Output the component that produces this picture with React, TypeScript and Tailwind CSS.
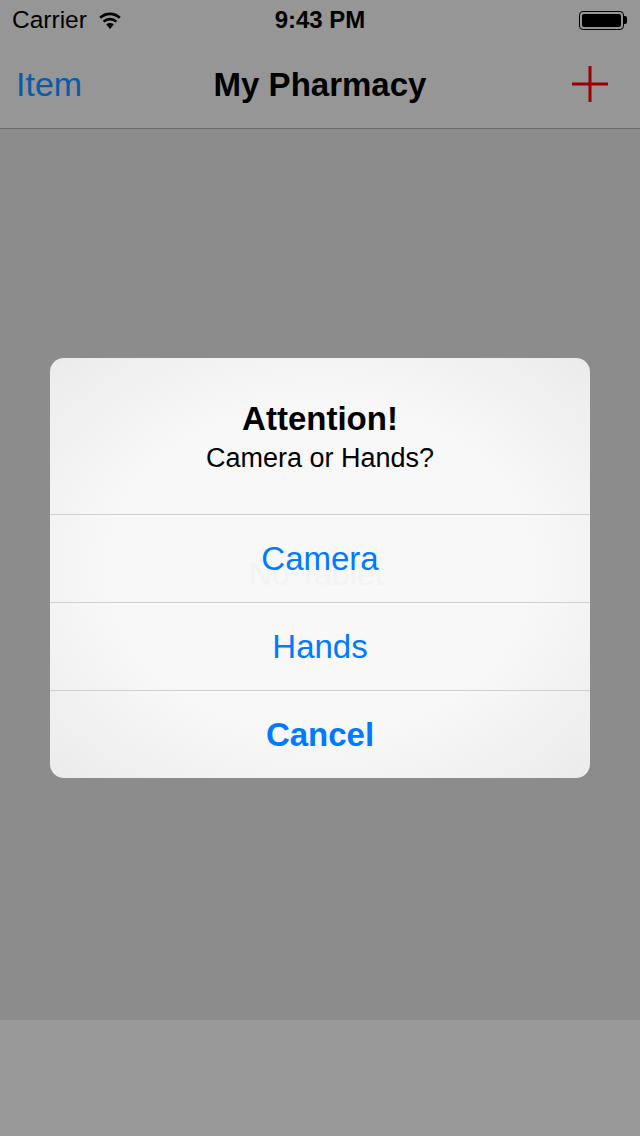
import { Fragment } from "react";

const font = { fontFamily: '"Liberation Sans", Arial, sans-serif' };

function Wifi() {
  return (
    <svg width="26" height="20" viewBox="0 0 26 20" className="text-black">
      <path d="M13 19 L9.2 14.6 A5.6 5.6 0 0 1 16.8 14.6 Z" fill="currentColor" />
      <path d="M6.6 11.6 A9.4 9.4 0 0 1 19.4 11.6" stroke="currentColor" strokeWidth="2.6" fill="none" />
      <path d="M3.2 7.8 A14.2 14.2 0 0 1 22.8 7.8" stroke="currentColor" strokeWidth="2.6" fill="none" />
    </svg>
  );
}

function Battery() {
  return (
    <div className="flex items-center">
      <div className="h-[19px] w-[45px] rounded-[4px] border border-black p-[2px]">
        <div className="h-full w-full rounded-[2px] bg-black" />
      </div>
      <div className="h-[8px] w-[3px] rounded-r-[2px] bg-black" />
    </div>
  );
}

function Plus() {
  return (
    <svg width="36" height="36" viewBox="0 0 36 36">
      <rect x="16.5" y="0" width="3" height="36" fill="#990000" />
      <rect x="0" y="16.5" width="36" height="3" fill="#990000" />
    </svg>
  );
}

const actions = [
  { label: "Camera", bold: false },
  { label: "Hands", bold: false },
  { label: "Cancel", bold: true },
];

export default function App() {
  return (
    <div className="relative flex h-[1136px] w-[640px] flex-col overflow-hidden bg-[#8c8c8c]" style={font}>
      {/* status bar */}
      <div className="relative flex h-10 items-center justify-between bg-[#969696] px-3">
        <div className="flex items-center gap-[10px]">
          <span className="text-[24.5px] leading-none text-black">Carrier</span>
          <Wifi />
        </div>
        <span className="absolute left-1/2 -translate-x-1/2 text-[24px] font-semibold leading-none text-black">
          9:43 PM
        </span>
        <div className="pr-[1px]">
          <Battery />
        </div>
      </div>

      {/* nav bar */}
      <div className="relative flex h-[89px] items-center justify-between border-b border-[#6d6d6d] bg-[#969696] pl-4 pr-[32px]">
        <span className="text-[34px] leading-none text-[#0b5aa6]">Item</span>
        <span className="absolute left-1/2 -translate-x-1/2 text-[33px] font-bold leading-none text-black">
          My Pharmacy
        </span>
        <Plus />
      </div>

      <div className="flex-1" />
      <div className="h-[116px] bg-[#999999]" />

      {/* alert */}
      <div className="absolute inset-0 flex items-center justify-center">
        <div className="relative w-[540px] overflow-hidden rounded-[14px] bg-[radial-gradient(ellipse_at_center,#f8f8f8_55%,#ebebeb_100%)]">
          <span className="pointer-events-none absolute left-[199px] top-[200px] text-[32px] leading-none text-[#f3f3f3]">
            No Tablet
          </span>
          <div className="relative flex h-[156px] flex-col items-center pt-[44px]">
            <span className="text-[33px] font-bold leading-none text-black">Attention!</span>
            <span className="mt-[10px] text-[27px] leading-none text-black">Camera or Hands?</span>
          </div>
          {actions.map((a) => (
            <Fragment key={a.label}>
              <div className="h-px bg-[#cfcfd3]" />
              <div className="relative flex h-[87px] items-center justify-center">
                <span
                  className={`text-[33px] leading-none text-[#007aff] ${a.bold ? "font-bold" : ""}`}
                >
                  {a.label}
                </span>
              </div>
            </Fragment>
          ))}
        </div>
      </div>
    </div>
  );
}
